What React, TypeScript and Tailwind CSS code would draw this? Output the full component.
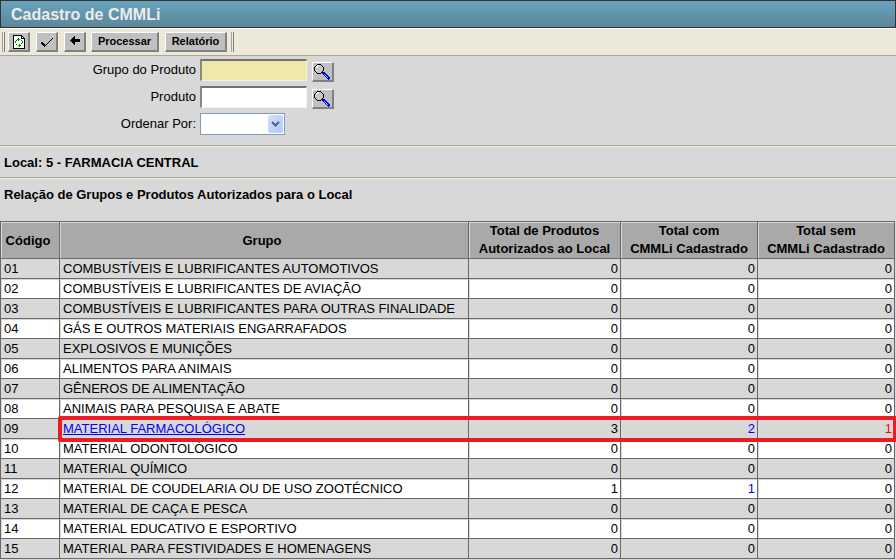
import type { ReactNode } from "react";

type Row = { code: string; name: string; total: number; withC: number; without: number; marked?: boolean };

const rows: Row[] = [
  { code: "01", name: "COMBUSTÍVEIS E LUBRIFICANTES AUTOMOTIVOS", total: 0, withC: 0, without: 0 },
  { code: "02", name: "COMBUSTÍVEIS E LUBRIFICANTES DE AVIAÇÃO", total: 0, withC: 0, without: 0 },
  { code: "03", name: "COMBUSTÍVEIS E LUBRIFICANTES PARA OUTRAS FINALIDADE", total: 0, withC: 0, without: 0 },
  { code: "04", name: "GÁS E OUTROS MATERIAIS ENGARRAFADOS", total: 0, withC: 0, without: 0 },
  { code: "05", name: "EXPLOSIVOS E MUNIÇÕES", total: 0, withC: 0, without: 0 },
  { code: "06", name: "ALIMENTOS PARA ANIMAIS", total: 0, withC: 0, without: 0 },
  { code: "07", name: "GÊNEROS DE ALIMENTAÇÃO", total: 0, withC: 0, without: 0 },
  { code: "08", name: "ANIMAIS PARA PESQUISA E ABATE", total: 0, withC: 0, without: 0 },
  { code: "09", name: "MATERIAL FARMACOLÓGICO", total: 3, withC: 2, without: 1, marked: true },
  { code: "10", name: "MATERIAL ODONTOLÓGICO", total: 0, withC: 0, without: 0 },
  { code: "11", name: "MATERIAL QUÍMICO", total: 0, withC: 0, without: 0 },
  { code: "12", name: "MATERIAL DE COUDELARIA OU DE USO ZOOTÉCNICO", total: 1, withC: 1, without: 0 },
  { code: "13", name: "MATERIAL DE CAÇA E PESCA", total: 0, withC: 0, without: 0 },
  { code: "14", name: "MATERIAL EDUCATIVO E ESPORTIVO", total: 0, withC: 0, without: 0 },
  { code: "15", name: "MATERIAL PARA FESTIVIDADES E HOMENAGENS", total: 0, withC: 0, without: 0 },
];

const bevel =
  "flex h-5 shrink-0 items-center justify-center border-t border-l border-r-2 border-b-2 border-t-white border-l-white border-r-[#808080] border-b-[#808080] bg-[#c0c0c0]";

function ToolButton({ label, children }: { label: string; children: ReactNode }) {
  return (
    <button type="button" aria-label={label} className={`${bevel} w-[22px]`}>
      {children}
    </button>
  );
}

function Grip() {
  return (
    <div className="flex h-5 shrink-0 gap-px">
      <span className="w-px bg-[#a5a295]" />
      <span className="w-px bg-[#808080]" />
    </div>
  );
}

function SearchButton({ label }: { label: string }) {
  return (
    <button type="button" aria-label={label} className={`${bevel} mt-[3px] ml-px w-[22px]`}>
      <svg width="17" height="16" viewBox="0 0 17 16" shapeRendering="crispEdges">
        <path d="M3 1h4v1h1v1h1v4h-1v1h-1v1h-4v-1h-1v-1h-1v-4h1v-1h1z" fill="#c8c8c8" />
        <path d="M3 1h2v1h-1v1h-1v1h-1v-2h1z" fill="#fff" />
        <path d="M3 0h4v1h-4zM2 1h1v1h-1zM7 1h1v1h-1zM1 2h1v1h-1zM8 2h1v1h-1zM0 3h1v4h-1zM9 3h1v4h-1zM1 7h1v1h-1zM8 7h1v1h-1zM2 8h1v1h-1zM7 8h1v1h-1zM3 9h4v1h-4zM8 8h2v1h-2z" fill="#000" />
        <path d="M9 8h2v1h1v1h1v1h1v1h1v1h1v2h-1v1h-1v-1h-1v-1h-1v-1h-1v-1h-1v-1h-1v-1h-1v-1h1z" fill="#0000f0" />
        <path d="M10 10h1v1h-1zM11 11h1v1h-1zM12 12h1v1h-1zM13 13h1v1h-1z" fill="#a8b8ff" />
      </svg>
    </button>
  );
}

const field =
  "h-[22px] w-[107px] border border-t-2 border-l-2 border-t-[#77736a] border-l-[#8c887c] border-r-[#f4f2ea] border-b-[#f4f2ea] px-1 outline-none";

const th = "border border-[#696969] p-0 font-bold shadow-[inset_1px_1px_0_#d8d8d8]";
const td = "h-5 border border-[#696969] py-0 align-middle leading-[18px] shadow-[inset_1px_1px_0_#d8d8d8]";

export default function App() {
  return (
    <div className="min-h-screen bg-[#d8d8d8] font-['Liberation_Sans',Arial,sans-serif] text-[13px] text-black">
      <header className="flex h-7 items-center border border-[#333] bg-linear-to-b from-[#69a3bd] to-[#5b879b] pt-0.5 pl-2.5">
        <h1 className="text-[16px] font-bold text-[#ececec]">Cadastro de CMMLi</h1>
      </header>

      <div
        role="toolbar"
        aria-label="Ações"
        className="flex h-7 items-center gap-1.5 border-t border-b border-t-white border-b-[#aca899] bg-[#ece9d8] pl-0.5 text-[11px] font-bold"
      >
        <div className="-mr-[3px]">
          <Grip />
        </div>
        <ToolButton label="Atualizar">
          <svg width="12" height="14" viewBox="0 0 12 14" shapeRendering="crispEdges">
            <path d="M0 0h9v1h1v1h1v1h1v11h-12z" fill="#000" />
            <path d="M1 1h7v3h3v9h-10z" fill="#fff" />
            <path d="M9 2h1v1h-1z" fill="#fff" />
            <path d="M4 4h3v1h-3zM5 3h1v3h-1zM3 5h1v1h-1zM2 6h1v2h-1zM8 5h1v1h-1zM9 6h1v2h-1zM8 8h1v1h-1zM5 10h3v1h-3zM6 9h1v3h-1zM3 9h1v1h-1z" fill="#008a00" />
          </svg>
        </ToolButton>
        <ToolButton label="Confirmar">
          <svg width="12" height="10" viewBox="0 0 12 10" shapeRendering="crispEdges">
            <path d="M0 5h2v1h1v1h1v1h1v-1h1v-1h1v-1h1v-1h1v-1h1v-1h1v-1h1v1h-1v1h-1v1h-1v1h-1v1h-1v1h-1v1h-1v1h-1v1h-1v-1h-1v-1h-1v-1h-1z" fill="#000" />
          </svg>
        </ToolButton>
        <ToolButton label="Voltar">
          <svg width="10" height="9" viewBox="0 0 10 9" shapeRendering="crispEdges" className="mb-0.5">
            <path d="M0 4h1v-1h1v-1h1v-1h1v-1h1v3h5v3h-5v3h-1v-1h-1v-1h-1v-1h-1v-1h-1z" fill="#000" />
          </svg>
        </ToolButton>
        <div className="-ml-px flex gap-1.5">
          <button type="button" className={`${bevel} w-[68px]`}>Processar</button>
          <button type="button" className={`${bevel} w-[62px]`}>Relatório</button>
        </div>
        <div className="-ml-0.5">
          <Grip />
        </div>
      </div>

      <form className="flex flex-col gap-[5px] border-b border-[#aca899] pt-[3px] pb-[10px] leading-[22px]">
        <div className="flex h-[22px] gap-1">
          <label htmlFor="grupo" className="w-[196px] text-right">Grupo do Produto</label>
          <input id="grupo" type="text" className={`${field} bg-[#eee8aa]`} />
          <SearchButton label="Pesquisar grupo" />
        </div>
        <div className="flex h-[22px] gap-1">
          <label htmlFor="produto" className="w-[196px] text-right">Produto</label>
          <input id="produto" type="text" className={`${field} bg-white`} />
          <SearchButton label="Pesquisar produto" />
        </div>
        <div className="flex h-[22px] gap-1">
          <label htmlFor="ordem" className="w-[196px] text-right">Ordenar Por:</label>
          <div className="relative h-[22px] w-[85px]">
            <select id="ordem" className="h-full w-full appearance-none border border-[#7f9db9] bg-white px-1 outline-none">
              <option value="" />
            </select>
            <span className="pointer-events-none absolute top-0.5 right-0.5 flex h-[18px] w-[15px] items-center justify-center rounded-[2px] bg-linear-to-br from-[#d3e0fd] to-[#b4c8f6]">
              <svg width="9" height="6" viewBox="0 0 9 6">
                <path d="M1 1l3.5 3.5L8 1" fill="none" stroke="#4d6185" strokeWidth="2" />
              </svg>
            </span>
          </div>
        </div>
      </form>

      <h2 className="flex h-8 items-center border-t border-b border-t-[#f1efe2] border-b-[#aca899] pt-px pl-1 font-bold">
        Local: 5 - FARMACIA CENTRAL
      </h2>
      <h3 className="mb-[11px] flex h-8 items-center border-t border-t-[#f1efe2] pl-1 font-bold">
        Relação de Grupos e Produtos Autorizados para o Local
      </h3>

      <div className="pr-px">
        <table className="w-full table-fixed border-collapse">
          <colgroup>
            <col className="w-[59px]" />
            <col />
            <col className="w-[152px]" />
            <col className="w-[137px]" />
            <col className="w-[137px]" />
          </colgroup>
          <thead>
            <tr className="h-[37px] bg-[#a9a9a9] leading-[18px]">
              <th scope="col" className={th}><span className="block pt-0.5 pr-1">Código</span></th>
              <th scope="col" className={th}><span className="block pt-0.5 pr-1">Grupo</span></th>
              <th scope="col" className={th}>Total de Produtos<br />Autorizados ao Local</th>
              <th scope="col" className={th}>Total com<br />CMMLi Cadastrado</th>
              <th scope="col" className={th}>Total sem<br />CMMLi Cadastrado</th>
            </tr>
          </thead>
          <tbody>
            {rows.map((r) => (
              <tr key={r.code} className={`odd:bg-[#d8d8d8] even:bg-white ${r.marked ? "relative" : ""}`}>
                <td className={`${td} pl-[3px]`}>{r.code}</td>
                <td className={`${td} pl-[3px] whitespace-nowrap`}>
                  {r.marked ? (
                    <>
                      <a href="#farmacologico" className="text-[#0000ff] underline">{r.name}</a>
                      <span className="pointer-events-none absolute -top-[3px] -right-0.5 left-[57px] z-10 h-[26px] rounded-[2px] border-4 border-[#ed1c24]" />
                    </>
                  ) : (
                    r.name
                  )}
                </td>
                <td className={`${td} pr-0.5 text-right`}>{r.total}</td>
                <td className={`${td} pr-0.5 text-right ${r.withC > 0 ? "text-[#0000ff]" : ""}`}>{r.withC}</td>
                <td className={`${td} pr-0.5 text-right ${r.without > 0 ? "text-[#ff0000]" : ""}`}>{r.without}</td>
              </tr>
            ))}
          </tbody>
        </table>
      </div>
    </div>
  );
}
